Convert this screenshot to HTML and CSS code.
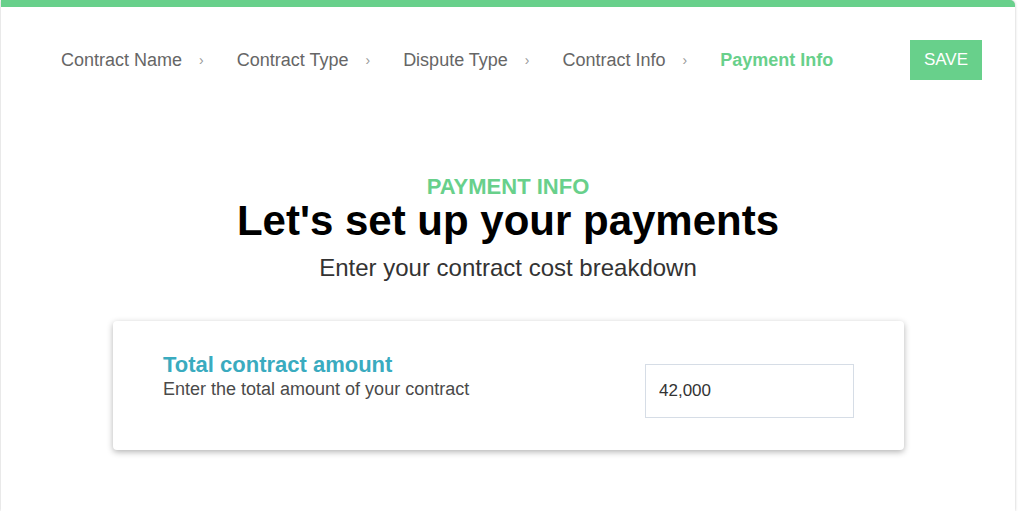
FILE: index.html
```html
<!DOCTYPE html>
<html lang="en">
<head>
<meta charset="utf-8">
<title>Payment Info</title>
<link rel="stylesheet" href="styles.css">
</head>
<body>
<div class="page">
  <header class="topbar">
    <nav class="crumbs">
      <span class="crumb">Contract Name</span><span class="sep">›</span>
      <span class="crumb">Contract Type</span><span class="sep">›</span>
      <span class="crumb">Dispute Type</span><span class="sep">›</span>
      <span class="crumb">Contract Info</span><span class="sep">›</span>
      <span class="crumb active">Payment Info</span>
    </nav>
    <button class="save">SAVE</button>
  </header>
  <section class="intro">
    <div class="eyebrow">PAYMENT INFO</div>
    <h1 class="title">Let's set up your payments</h1>
    <p class="subtitle">Enter your contract cost breakdown</p>
  </section>
  <div class="card">
    <div class="card-text">
      <div class="card-title">Total contract amount</div>
      <div class="card-desc">Enter the total amount of your contract</div>
    </div>
    <input class="amount" type="text" value="42,000">
  </div>
</div>
</body>
</html>
```
FILE: styles.css
```css
html, body {
  margin: 0;
  padding: 0;
  background: #fff;
  font-family: "Liberation Sans", Arial, sans-serif;
}
.page {
  margin-left: 1px;
  width: 1014px;
  height: 511px;
  box-sizing: border-box;
  border-top: 7px solid #68d08b;
  border-top-right-radius: 5px;
  box-shadow: 0 0 3px rgba(0,0,0,0.25);
  background: #fff;
  overflow: hidden;
}
.topbar {
  display: flex;
  align-items: center;
  justify-content: space-between;
  padding: 33px 33px 0 60px;
  height: 40px;
}
.crumbs {
  display: flex;
  align-items: center;
  font-size: 18px;
  color: #666;
}
.sep {
  margin: 0 33px 0 17px;
  color: #999;
  font-size: 14px;
}
.crumb.active {
  color: #68d08b;
  font-weight: bold;
}
.save {
  width: 72px;
  height: 40px;
  border: none;
  background: #68d08b;
  color: #fff;
  font-family: inherit;
  font-size: 17px;
  padding: 0;
}
.intro {
  text-align: center;
  margin-top: 97px;
}
.eyebrow {
  color: #68d08b;
  font-weight: bold;
  font-size: 22px;
  line-height: 20px;
}
.title {
  margin: 4px 0 0;
  font-size: 42px;
  line-height: 40px;
  color: #000;
}
.subtitle {
  margin: 13px 0 0;
  font-size: 24px;
  line-height: 28px;
  color: #333;
}
.card {
  margin: 39px 0 0 112px;
  width: 791px;
  height: 129px;
  box-sizing: border-box;
  border-radius: 4px;
  box-shadow: 0 2px 6px rgba(0,0,0,0.3);
  display: flex;
  align-items: flex-start;
  justify-content: space-between;
  padding: 0 50px;
}
.card-text {
  margin-top: 32px;
}
.card-title {
  color: #3aabbf;
  font-weight: bold;
  font-size: 22px;
  line-height: 24px;
}
.card-desc {
  color: #4a4a4a;
  font-size: 18px;
  line-height: 24px;
}
.amount {
  margin-top: 43px;
  width: 209px;
  height: 54px;
  box-sizing: border-box;
  border: 1px solid #d6dde6;
  padding: 0 13px;
  font-family: inherit;
  font-size: 17px;
  color: #333;
  outline: none;
}
```
